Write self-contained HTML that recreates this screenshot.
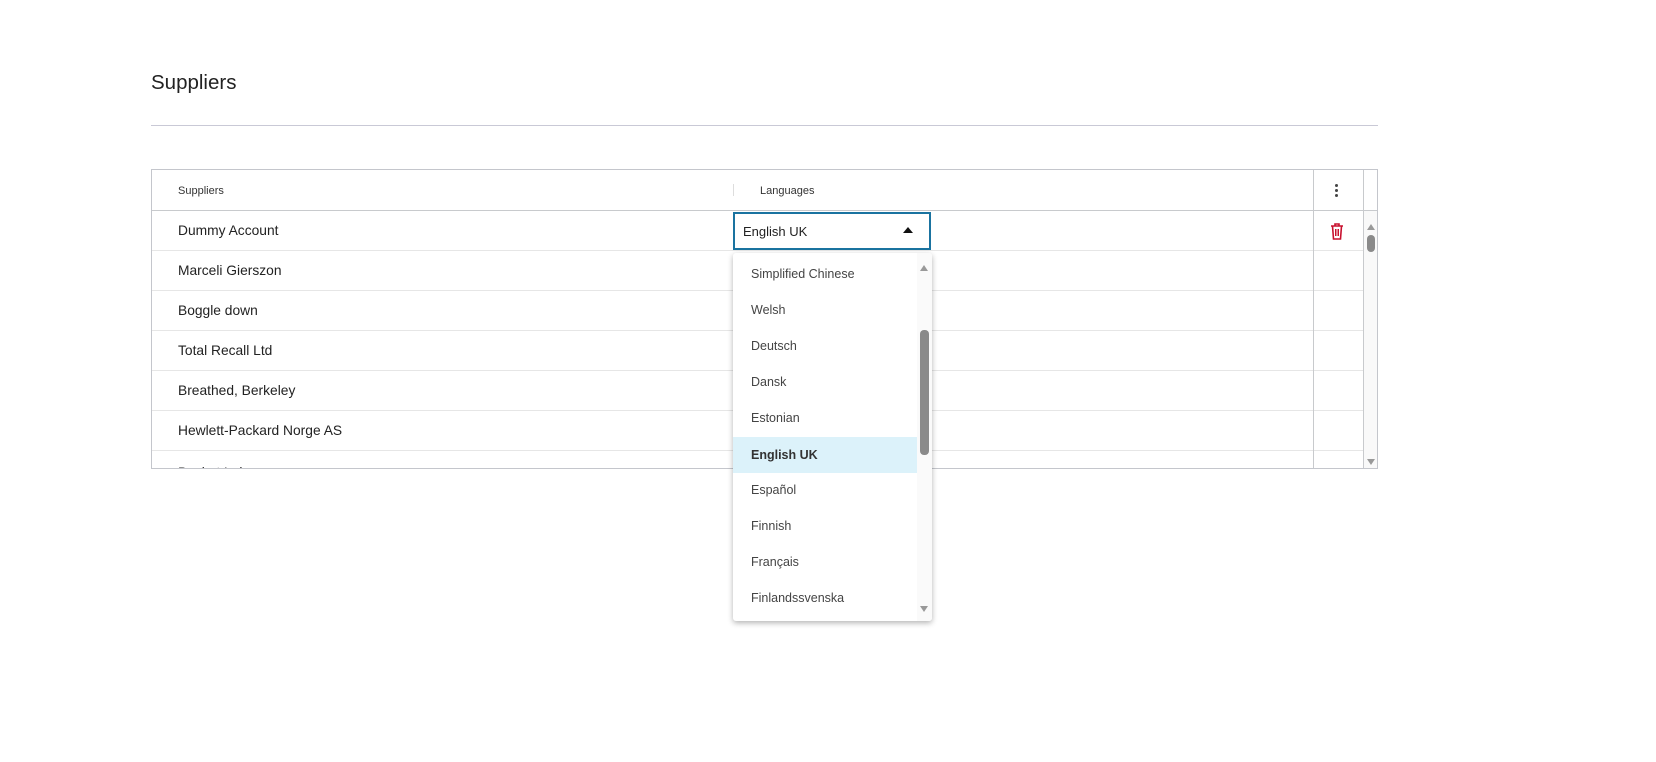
<!DOCTYPE html>
<html><head><meta charset="utf-8"><style>
*{box-sizing:border-box;margin:0;padding:0}
body{width:1656px;height:762px;background:#fff;font-family:"Liberation Sans",sans-serif;color:#222;position:relative;overflow:hidden}
.abs{position:absolute}
.title{left:151px;top:71px;font-size:20.5px;color:#222}
.hr{left:151px;top:125px;width:1227px;height:1px;background:#c9c9d6}
.table{left:151px;top:169px;width:1227px;height:300px;border:1px solid #c4c6cc;overflow:hidden}
.hdr{position:absolute;left:0;top:0;width:100%;height:41px;border-bottom:1px solid #c8cacd}
.hdr span{position:absolute;top:15px;font-size:11px;color:#333}
.row{position:absolute;left:0;width:1212px;height:40px;border-bottom:1px solid #e6e6e6;font-size:13.8px}
.row span{position:absolute;left:26px;top:12px}
.vl{position:absolute;top:0;width:1px;height:100%;background:#c8cacd}
.input{left:733px;top:212px;width:198px;height:38px;border:2px solid #1a73a0;background:#fff;font-size:13px}
.list{left:733px;top:253px;width:199px;height:368px;background:#fff;border-radius:3px;box-shadow:0 2px 6px rgba(0,0,0,.3);overflow:hidden}
.item{position:absolute;left:0;width:184px;height:36px;font-size:12.5px;color:#444;padding-left:18px;line-height:36px}
</style></head><body>
<div class="abs title">Suppliers</div>
<div class="abs hr"></div>
<div class="abs table">
  <div class="hdr"><span style="left:26px">Suppliers</span><span style="left:608px">Languages</span>
    <div style="position:absolute;left:581px;top:14px;width:1px;height:12px;background:#ddd"></div>
    <div style="position:absolute;left:1161px;top:0;width:1px;height:41px;background:#c8cacd"></div>
    <div style="position:absolute;left:1211px;top:0;width:1px;height:41px;background:#c8cacd"></div>
    <div style="position:absolute;left:1183px;top:14px;width:3px;height:3px;background:#444;border-radius:50%;box-shadow:0 5px 0 #444,0 10px 0 #444"></div>
  </div>
  <div class="row" style="top:41px"><span>Dummy Account</span></div>
  <div class="row" style="top:81px"><span>Marceli Gierszon</span></div>
  <div class="row" style="top:121px"><span>Boggle down</span></div>
  <div class="row" style="top:161px"><span>Total Recall Ltd</span></div>
  <div class="row" style="top:201px"><span>Breathed, Berkeley</span></div>
  <div class="row" style="top:241px"><span>Hewlett-Packard Norge AS</span></div>
  <div class="row" style="top:281px;border:none"><span style="top:14px">Bucket Lab</span></div>
  <div class="vl" style="left:1161px;top:41px"></div>
  <div class="vl" style="left:1211px;top:41px"></div>
  <div style="position:absolute;left:1212px;top:41px;width:14px;height:259px;background:#f9f9f9"></div>
  <div style="position:absolute;left:1215px;top:54px;width:0;height:0;border-left:4px solid transparent;border-right:4px solid transparent;border-bottom:6px solid #999"></div>
  <div style="position:absolute;left:1215px;top:65px;width:8px;height:17px;background:#8a8a8a;border-radius:4px"></div>
  <div style="position:absolute;left:1215px;top:289px;width:0;height:0;border-left:4px solid transparent;border-right:4px solid transparent;border-top:6px solid #999"></div>
  <svg style="position:absolute;left:1178px;top:53px" width="14" height="17" viewBox="0 0 14 17"><path d="M1 3h12M5 3V1h4v2M2.5 3l1 13h7l1-13" fill="none" stroke="#c8102e" stroke-width="1.6"/><path d="M5.5 6v7M7 6v7M8.5 6v7" stroke="#c8102e" stroke-width="1"/></svg>
</div>
<div class="abs input"><span style="position:absolute;left:8px;top:10px">English UK</span>
  <div style="position:absolute;left:168px;top:13px;width:0;height:0;border-left:5px solid transparent;border-right:5px solid transparent;border-bottom:6px solid #111"></div></div>
<div class="abs list">
  <div class="item" style="top:3px">Simplified Chinese</div>
  <div class="item" style="top:39px">Welsh</div>
  <div class="item" style="top:75px">Deutsch</div>
  <div class="item" style="top:111px">Dansk</div>
  <div class="item" style="top:147px">Estonian</div>
  <div class="item" style="top:184px;background:#dcf2fa;font-weight:bold;color:#333">English UK</div>
  <div class="item" style="top:219px">Español</div>
  <div class="item" style="top:255px">Finnish</div>
  <div class="item" style="top:291px">Français</div>
  <div class="item" style="top:327px">Finlandssvenska</div>
  <div style="position:absolute;left:184px;top:0;width:15px;height:368px;background:#fafafa"></div>
  <div style="position:absolute;left:187px;top:12px;border-left:4px solid transparent;border-right:4px solid transparent;border-bottom:6px solid #999"></div>
  <div style="position:absolute;left:187px;top:77px;width:9px;height:125px;background:#8a8a8a;border-radius:4px"></div>
  <div style="position:absolute;left:187px;top:353px;border-left:4px solid transparent;border-right:4px solid transparent;border-top:6px solid #999"></div>
</div>
</body></html>
